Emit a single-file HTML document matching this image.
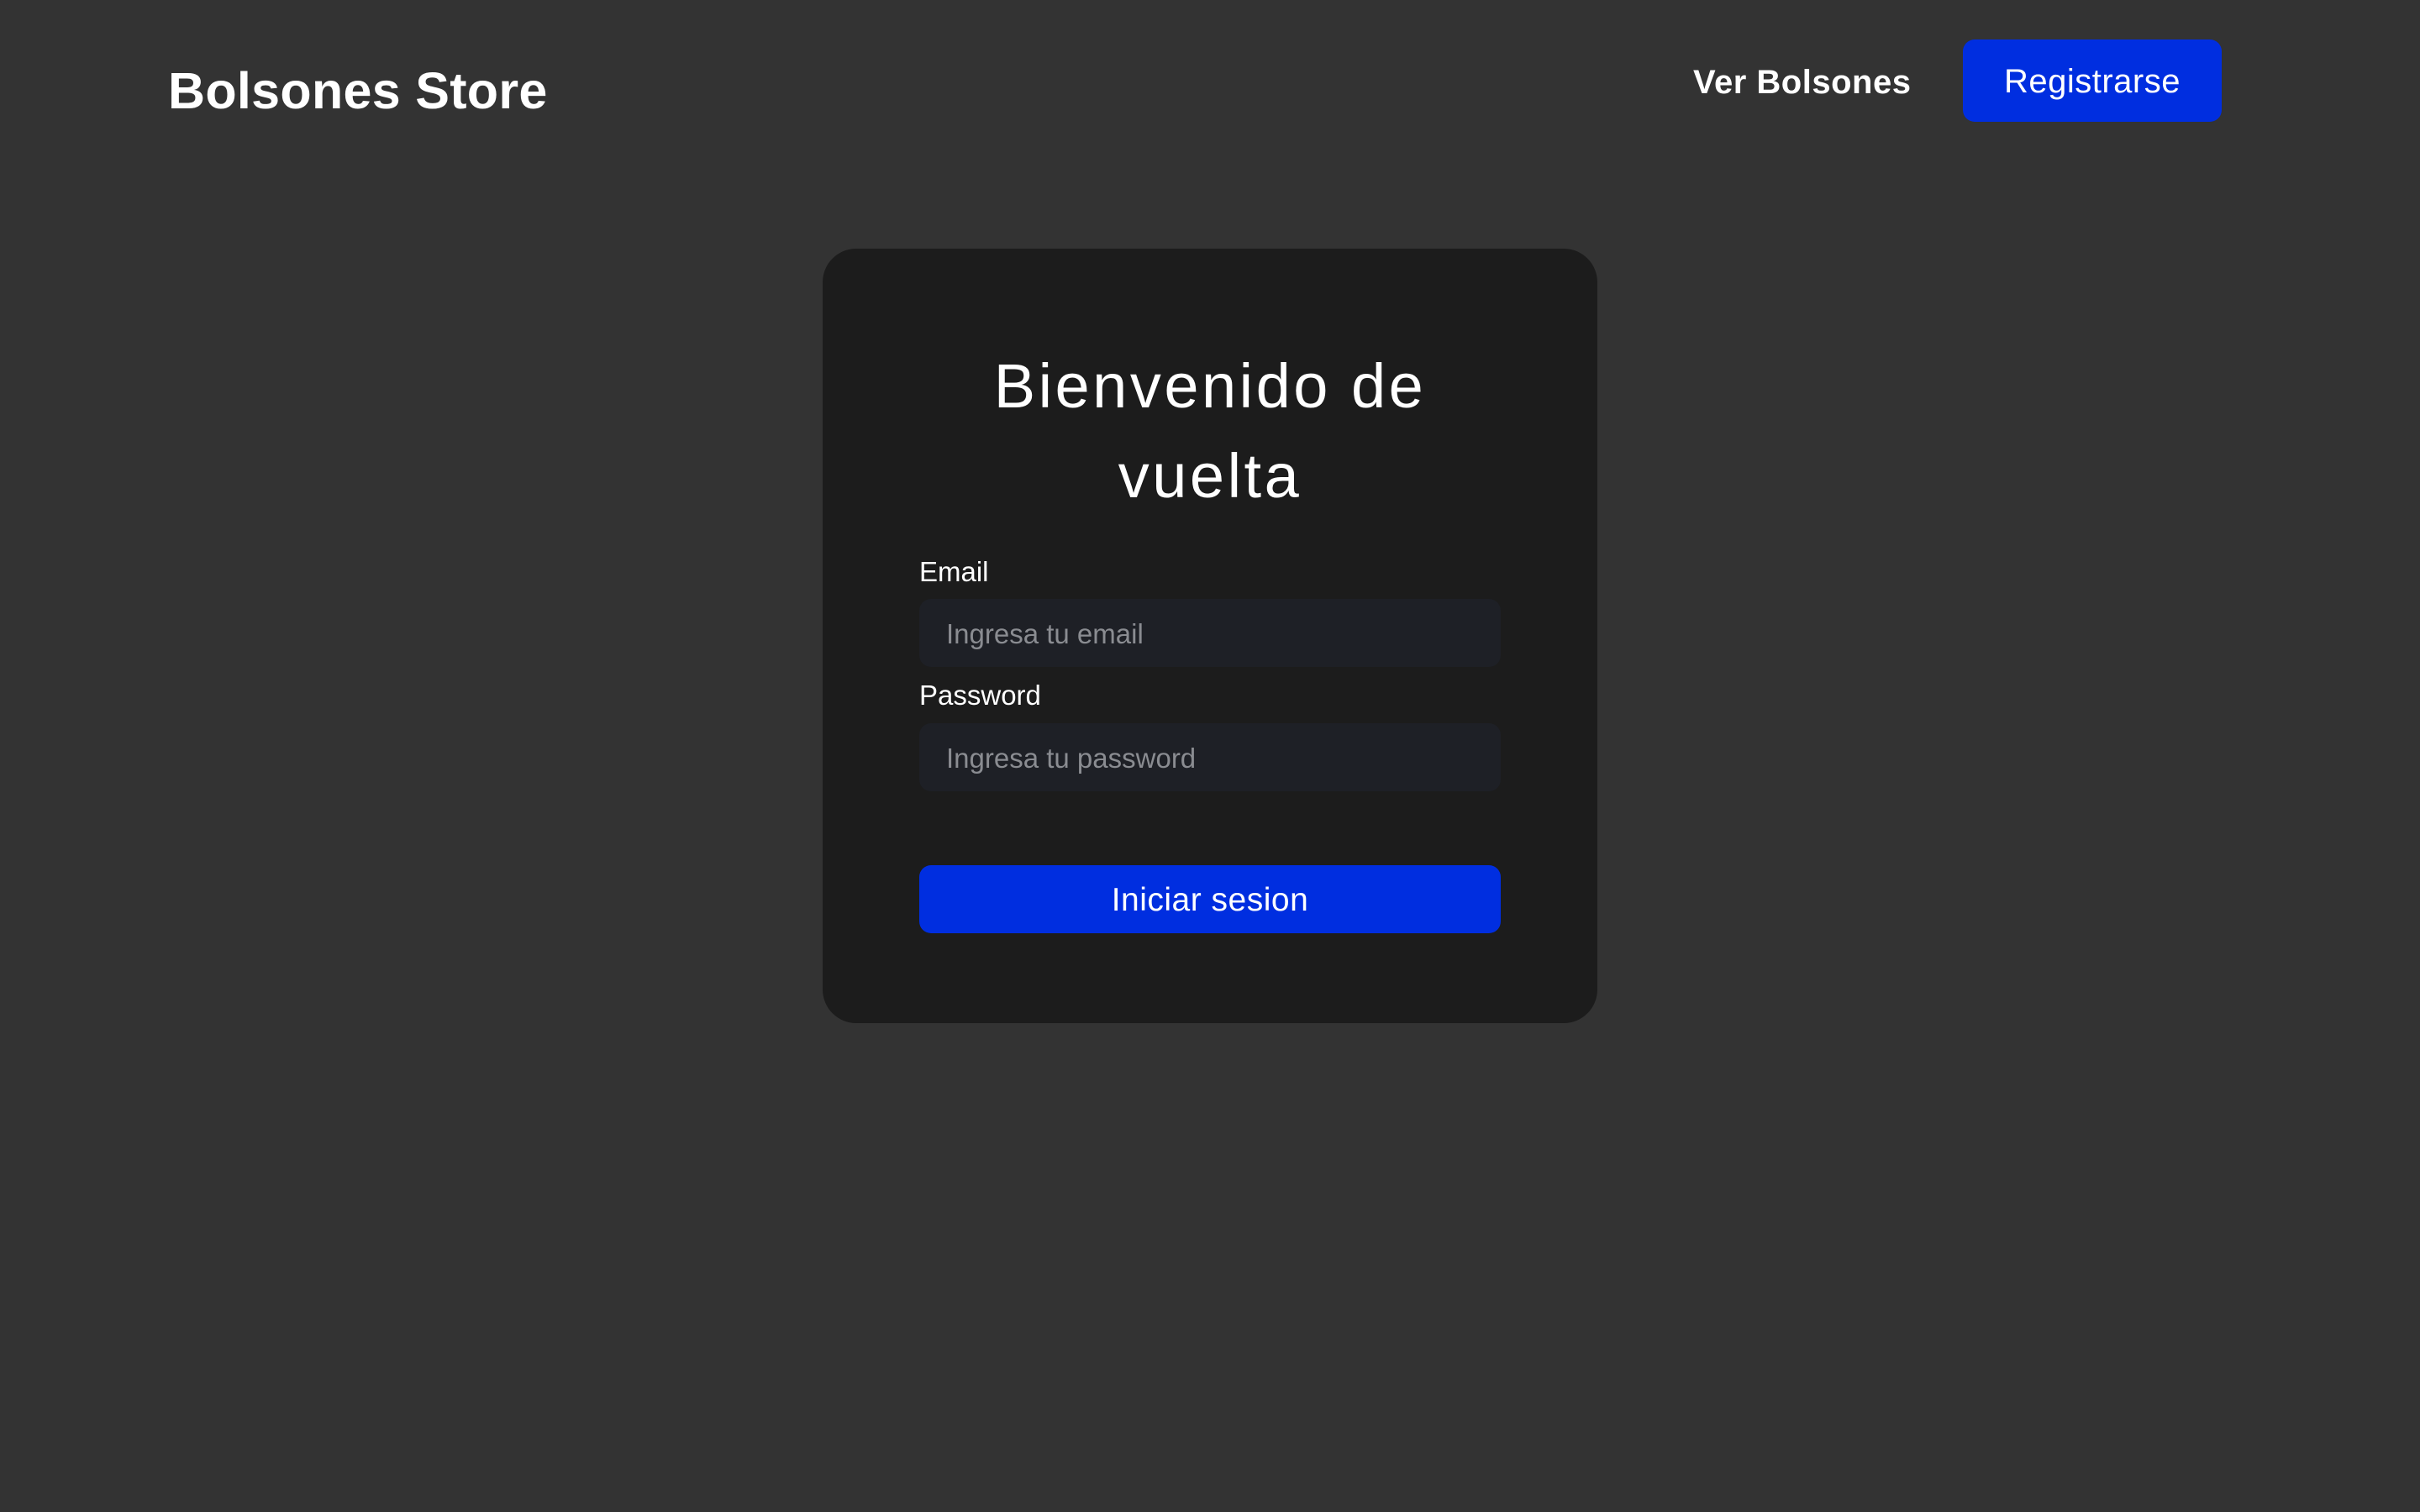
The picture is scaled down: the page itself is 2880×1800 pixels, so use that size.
<!DOCTYPE html>
<html><head><meta charset="utf-8">
<style>
html,body{margin:0;padding:0;}
body{width:2880px;height:1800px;background:#333333;font-family:"Liberation Sans",sans-serif;color:#fff;position:relative;overflow:hidden;}
.logo{position:absolute;left:200px;top:68px;font-size:61px;font-weight:bold;letter-spacing:0.3px;line-height:80px;}
.nav1{position:absolute;left:2015px;top:72px;font-size:40px;font-weight:bold;line-height:52px;letter-spacing:0.5px;}
.reg{position:absolute;left:2336px;top:47px;width:308px;height:98px;background:#002ee0;border-radius:14px;font-size:40px;line-height:100px;text-align:center;letter-spacing:0.5px;}
.card{position:absolute;left:979px;top:296px;width:922px;height:922px;background:#1c1c1c;border-radius:40px;}
.title{position:absolute;width:922px;top:406px;text-align:center;font-size:74px;line-height:107px;letter-spacing:3.5px;}
.lbl{position:absolute;left:1094px;font-size:33px;line-height:40px;}
.inp{position:absolute;left:1094px;width:692px;height:81px;background:#1e2026;border-radius:14px;color:#8a8c91;font-size:33px;line-height:84px;text-indent:32px;}
.btn{position:absolute;left:1094px;top:1030px;width:692px;height:81px;background:#002ee0;border-radius:14px;font-size:39px;line-height:84px;text-align:center;letter-spacing:0.5px;}
</style></head><body>
<div class="logo">Bolsones Store</div>
<div class="nav1">Ver Bolsones</div>
<div class="reg">Registrarse</div>
<div class="card"></div>
<div class="title" style="left:979px">Bienvenido de<br>vuelta</div>
<div class="lbl" style="top:661px">Email</div>
<div class="inp" style="top:713px">Ingresa tu email</div>
<div class="lbl" style="top:808px">Password</div>
<div class="inp" style="top:861px">Ingresa tu password</div>
<div class="btn">Iniciar sesion</div>
</body></html>
